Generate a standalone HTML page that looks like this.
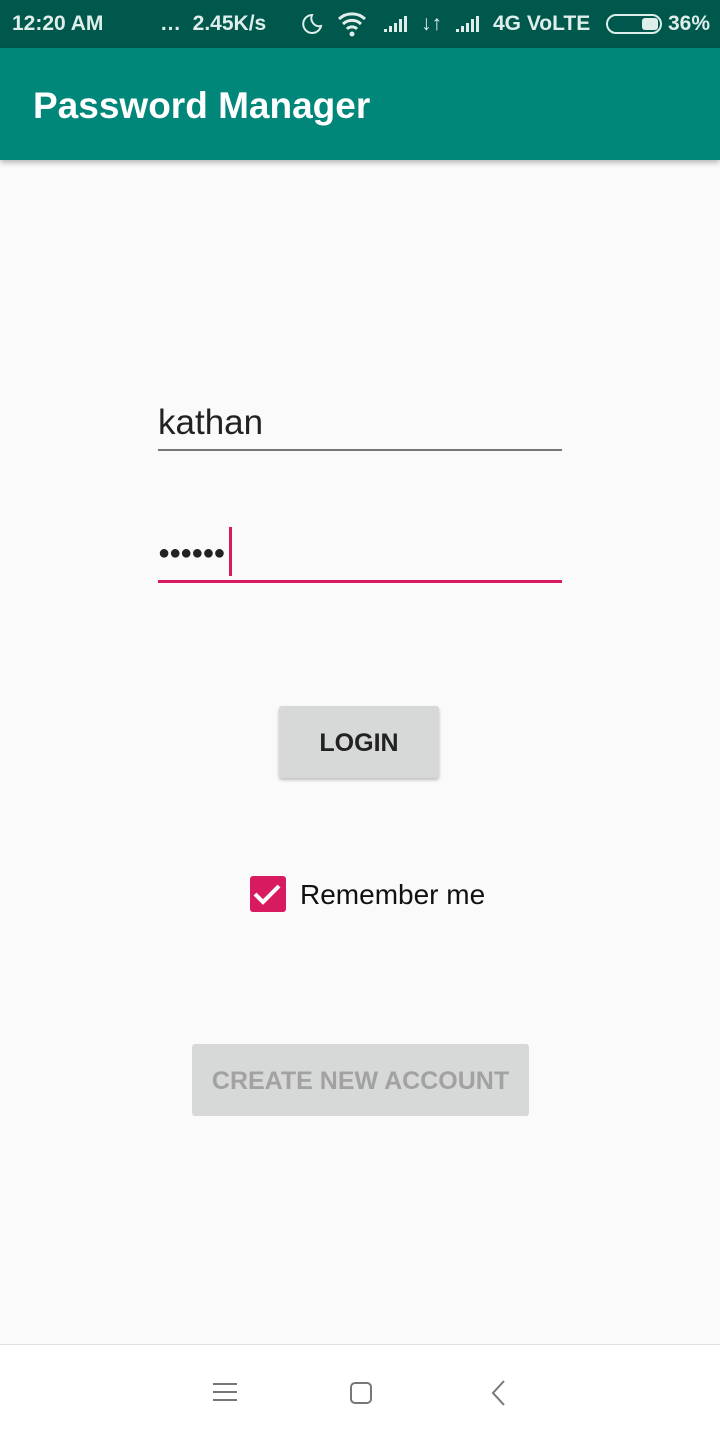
<!DOCTYPE html>
<html><head><style>
*{margin:0;padding:0;box-sizing:border-box}
body{width:720px;height:1440px;background:#fafafa;font-family:"Liberation Sans",sans-serif;position:relative;overflow:hidden}
.abs{position:absolute}
</style></head><body>
<div class="abs" style="left:0;top:0;width:720px;height:48px;background:#00574b;color:#dfeeea;font-weight:bold;font-size:21px">
 <span class="abs" style="left:12px;top:12px">12:20 AM</span>
 <span class="abs" style="left:160px;top:12px">…&nbsp; 2.45K/s</span>
 <svg class="abs" style="left:300px;top:12px" width="24" height="24" viewBox="0 0 24 24"><path d="M12 3a9 9 0 1 0 9 11A8 8 0 0 1 12 3z" fill="none" stroke="#dfeeea" stroke-width="2"/></svg>
 <svg class="abs" style="left:336px;top:10px" width="34" height="28" viewBox="0 0 34 28"><path d="M3 9a19 19 0 0 1 26 0M7 14a13 13 0 0 1 18 0M11 19a7 7 0 0 1 10 0" fill="none" stroke="#dfeeea" stroke-width="3"/><circle cx="16" cy="24" r="2.5" fill="#dfeeea"/></svg>
 <svg class="abs" style="left:382px;top:14px" width="30" height="20"><path d="M2 18h3v-3H2zM7 18h3v-6H7zM12 18h3V9h-3zM17 18h3V5h-3zM22 18h3V2h-3z" fill="#dfeeea"/></svg>
 <span class="abs" style="left:421px;top:12px">↓↑</span>
 <svg class="abs" style="left:454px;top:14px" width="30" height="20"><path d="M2 18h3v-3H2zM7 18h3v-6H7zM12 18h3V9h-3zM17 18h3V5h-3zM22 18h3V2h-3z" fill="#dfeeea"/></svg>
 <span class="abs" style="left:493px;top:12px">4G VoLTE</span>
 <div class="abs" style="left:606px;top:14px;width:56px;height:20px;border:2px solid #dfeeea;border-radius:10px"><div class="abs" style="right:2px;top:2px;width:16px;height:12px;background:#dfeeea;border-radius:3px"></div></div>
 <span class="abs" style="left:668px;top:12px">36%</span>
</div>
<div class="abs" style="left:0;top:48px;width:720px;height:112px;background:#00877a;box-shadow:0 3px 5px rgba(0,0,0,.25)">
 <span class="abs" style="left:33px;top:37px;color:#fff;font-size:37px;font-weight:bold">Password Manager</span>
</div>
<span class="abs" style="left:158px;top:403px;font-size:35px;color:#222">kathan</span>
<div class="abs" style="left:158px;top:449px;width:404px;height:2px;background:#777"></div>
<div class="abs" style="left:158px;top:542px;font-size:20px;letter-spacing:-1px;color:#222">●●●●●●</div>
<div class="abs" style="left:229px;top:527px;width:3px;height:49px;background:#d81b60"></div>
<div class="abs" style="left:158px;top:580px;width:404px;height:3px;background:#d81b60"></div>
<div class="abs" style="left:279px;top:706px;width:160px;height:72px;background:#d7d8d8;border-radius:3px;box-shadow:0 2px 3px rgba(0,0,0,.25);text-align:center;line-height:74px;font-size:25px;font-weight:bold;color:#222">LOGIN</div>
<div class="abs" style="left:250px;top:876px;width:36px;height:36px;background:#d81b60;border-radius:3px"><svg width="36" height="36"><path d="M5 18l8 8 16-16" fill="none" stroke="#fff" stroke-width="4"/></svg></div>
<span class="abs" style="left:300px;top:879px;font-size:28px;color:#111">Remember me</span>
<div class="abs" style="left:192px;top:1044px;width:337px;height:72px;background:#d7d8d8;border-radius:3px;text-align:center;line-height:74px;font-size:25px;font-weight:bold;color:#a2a2a2">CREATE NEW ACCOUNT</div>
<div class="abs" style="left:0;top:1344px;width:720px;height:96px;background:#fff;border-top:1px solid #e2e2e2">
 <svg class="abs" style="left:212px;top:36px" width="26" height="22"><path d="M1 3h24M1 11h24M1 19h24" stroke="#777" stroke-width="2"/></svg>
 <div class="abs" style="left:350px;top:37px;width:22px;height:22px;border:2px solid #777;border-radius:5px"></div>
 <svg class="abs" style="left:488px;top:34px" width="20" height="28"><path d="M16 2L5 14l11 12" fill="none" stroke="#777" stroke-width="2"/></svg>
</div>
</body></html>
